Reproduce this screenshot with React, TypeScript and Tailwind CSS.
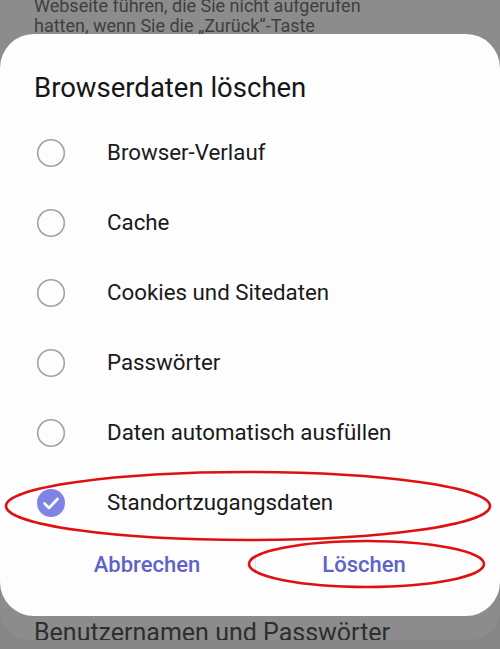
import React from "react";

const items = [
  { label: "Browser-Verlauf", checked: false },
  { label: "Cache", checked: false },
  { label: "Cookies und Sitedaten", checked: false },
  { label: "Passwörter", checked: false },
  { label: "Daten automatisch ausfüllen", checked: false },
  { label: "Standortzugangsdaten", checked: true },
];

function Radio({ checked }: { checked: boolean }) {
  if (checked) {
    return (
      <svg width="30" height="30" viewBox="0 0 30 30">
        <circle cx="15" cy="15" r="14" fill="#7f83e3" />
        <path d="M8.5 15.5 L13 20 L21.5 11" fill="none" stroke="#fff" strokeWidth="2.6" strokeLinecap="round" strokeLinejoin="round" />
      </svg>
    );
  }
  return (
    <svg width="30" height="30" viewBox="0 0 30 30">
      <circle cx="15" cy="15" r="13.3" fill="none" stroke="#a3a3a3" strokeWidth="1.6" />
    </svg>
  );
}

export default function App() {
  return (
    <div
      className="relative w-[500px] h-[649px] overflow-hidden bg-[#868686] flex flex-col"
      style={{ fontFamily: "Roboto, 'Noto Sans', sans-serif" }}
    >
      <div className="bg-[#8c8c8c] rounded-b-[28px] h-[640px] flex flex-col shrink-0 overflow-hidden">
        <div className="h-[34px] shrink-0 overflow-hidden flex flex-col justify-end pl-[34px] text-[18px] leading-[20px] text-[#3f3f3f]">
          <div>Webseite führen, die Sie nicht aufgerufen</div>
          <div className="mb-[-2px]">hatten, wenn Sie die „Zurück“-Taste</div>
        </div>
        <div className="bg-[#fdfdfd] rounded-[34px] h-[582px] shrink-0 flex flex-col relative">
          <div className="pl-[34px] pt-[36px] text-[27.5px] leading-[36px] text-[#161616] h-[84px]">
            Browserdaten löschen
          </div>
          <div className="flex flex-col">
            {items.map((it) => (
              <div key={it.label} className="h-[70px] flex items-center pl-[36px]">
                <Radio checked={it.checked} />
                <span className="ml-[41px] text-[22.3px] text-[#1a1a1a]">{it.label}</span>
              </div>
            ))}
          </div>
          <div className="flex items-center h-[58px] mt-[-3px]">
            <div className="flex-1 flex justify-center pl-[39px] text-[22px] font-medium text-[#5e62c9]">
              Abbrechen
            </div>
            <div className="w-px h-[22px] bg-[#e6e6e6]" />
            <div className="flex-1 flex justify-center pr-[28px] text-[22px] font-medium text-[#5e62c9]">
              Löschen
            </div>
          </div>
          <svg className="absolute left-0 top-0 pointer-events-none" width="500" height="582" viewBox="0 0 500 582">
            <ellipse cx="248" cy="472" rx="242" ry="34" fill="none" stroke="#e01010" strokeWidth="2.6" />
            <ellipse cx="366.5" cy="530" rx="117.5" ry="23" fill="none" stroke="#e01010" strokeWidth="2.6" />
          </svg>
        </div>
        <div className="pl-[34px] pt-[2px] text-[25px] leading-[30px] text-[#2e2e2e]">
          Benutzernamen und Passwörter
        </div>
      </div>
    </div>
  );
}
